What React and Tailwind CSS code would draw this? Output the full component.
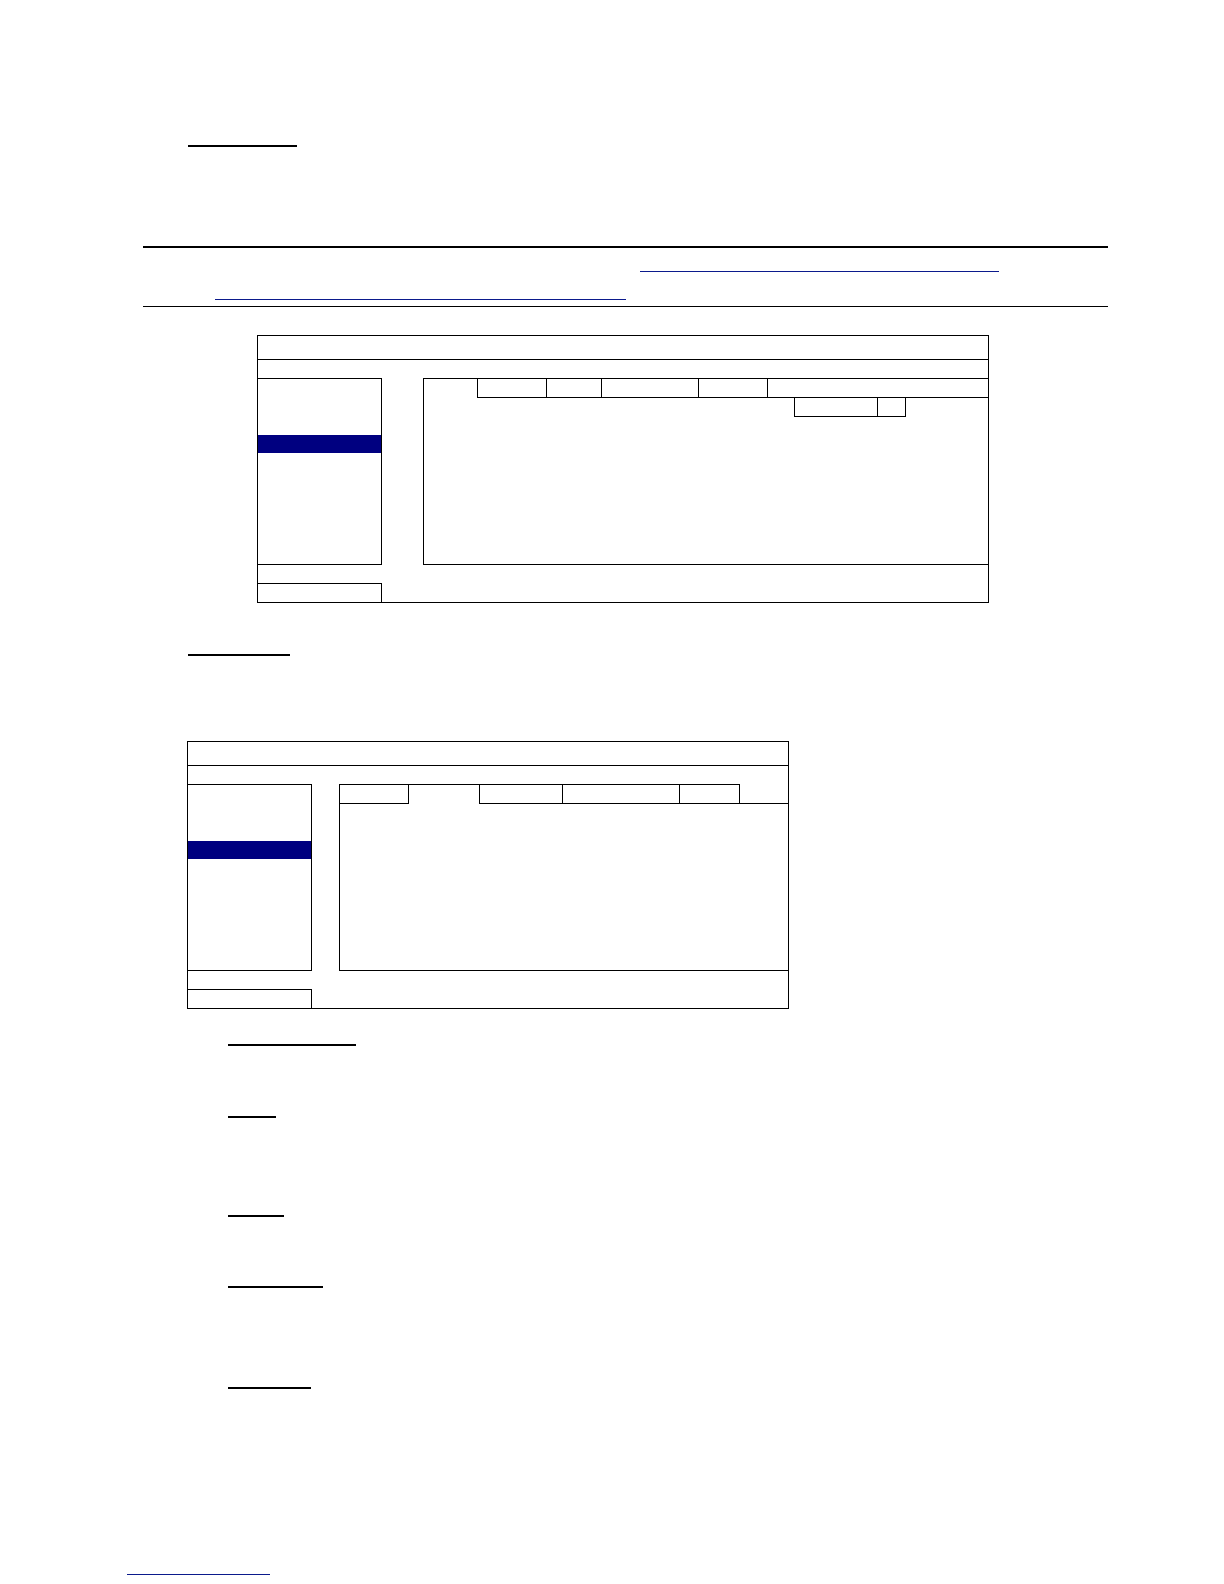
const NAVY = 'bg-[#000080]'

const Rule = ({ className }) => <div className={`shrink-0 ${className}`} />

const SideList = () => (
  <div className="w-[124px] h-[187px] border-t border-r border-b border-black">
    <div className={`mt-[56px] h-[18px] ${NAVY}`} />
  </div>
)

const Footer = () => (
  <div className="h-[37px] flex items-end">
    <div className="w-[124px] h-[19px] border-t border-r border-black" />
  </div>
)

const RecordSetup = () => (
  <div className="ml-[257px] w-[732px] h-[268px] border border-black flex flex-col">
    <div className="h-[24px] border-b border-black" />
    <div className="pt-[18px] flex">
      <SideList />
      <div className="ml-[41px] flex-1 h-[187px] border-t border-l border-b border-black flex flex-col">
        <div className="h-[19px] flex">
          <div className="w-[53px]" />
          <div className="w-[69px] border-l border-b border-black" />
          <div className="w-[55px] border-l border-b border-black" />
          <div className="w-[97px] border-l border-b border-black" />
          <div className="w-[69px] border-l border-b border-black" />
          <div className="flex-1 border-l border-b border-black" />
        </div>
        <div className="ml-[370px] h-[19px] flex">
          <div className="w-[83px] border-l border-b border-black" />
          <div className="w-[29px] border-l border-r border-b border-black" />
        </div>
      </div>
    </div>
    <Footer />
  </div>
)

const ScheduleSetup = () => (
  <div className="ml-[187px] w-[602px] h-[268px] border border-black flex flex-col">
    <div className="h-[24px] border-b border-black" />
    <div className="pt-[18px] flex">
      <SideList />
      <div className="ml-[27px] flex-1 h-[187px] border-l border-b border-black flex flex-col">
        <div className="h-[20px] flex">
          <div className="w-[69px] border-t border-r border-b border-black" />
          <div className="w-[70px] border-t border-black" />
          <div className="w-[83px] border-t border-l border-b border-black" />
          <div className="w-[117px] border-t border-l border-b border-black" />
          <div className="w-[61px] border-t border-l border-r border-b border-black" />
          <div className="flex-1 border-b border-black" />
        </div>
      </div>
    </div>
    <Footer />
  </div>
)

export default function App() {
  return (
    <div className="w-[1224px] min-h-[1584px] bg-white font-['Liberation_Sans',Arial,sans-serif] flex flex-col items-start pt-[145px]">
      {/* section heading */}
      <Rule className="ml-[188px] w-[109px] h-[2px] bg-black" />

      {/* note box */}
      <Rule className="mt-[99px] ml-[143px] w-[965px] h-[2px] bg-black" />
      <Rule className="mt-[23px] ml-[640px] w-[359px] h-px bg-[#0b1a8c]" />
      <Rule className="mt-[27px] ml-[215px] w-[411px] h-px bg-[#0b1a8c]" />
      <Rule className="mt-[6px] ml-[143px] w-[965px] h-px bg-black" />

      <div className="mt-[28px]">
        <RecordSetup />
      </div>

      <Rule className="mt-[51px] ml-[188px] w-[102px] h-[2px] bg-black" />

      <div className="mt-[85px]">
        <ScheduleSetup />
      </div>

      <Rule className="mt-[35px] ml-[228px] w-[128px] h-[2px] bg-black" />
      <Rule className="mt-[70px] ml-[228px] w-[48px] h-[2px] bg-black" />
      <Rule className="mt-[97px] ml-[228px] w-[56px] h-[2px] bg-black" />
      <Rule className="mt-[69px] ml-[228px] w-[95px] h-[2px] bg-black" />
      <Rule className="mt-[99px] ml-[228px] w-[83px] h-[2px] bg-black" />

      {/* page footer link */}
      <Rule className="mt-[185px] ml-[127px] w-[143px] h-px bg-[#0b1a8c]" />
    </div>
  )
}
